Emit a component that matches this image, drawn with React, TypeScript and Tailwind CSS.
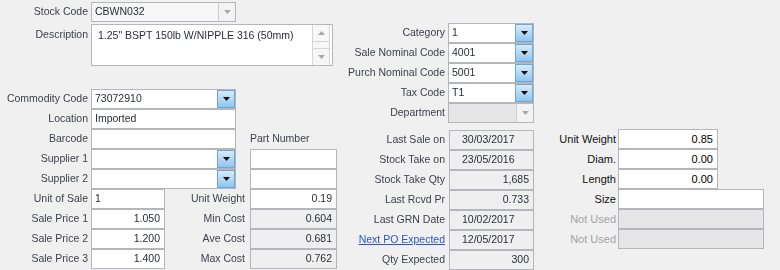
import React from "react";

type Kind = "white" | "ro" | "dis" | "lite";

const kindCls: Record<Kind, string> = {
  white: "bg-white",
  ro: "bg-[#efefef]",
  dis: "bg-[#e6e6e6]",
  lite: "bg-[#f6f6f6]",
};

const Box: React.FC<{
  w: string;
  kind?: Kind;
  right?: boolean;
  children?: React.ReactNode;
}> = ({ w, kind = "white", right, children }) => {
  return (
    <div
      className={`${w} h-[20px] flex items-center border border-[#b4b6bc] ${kindCls[kind]} ${
        right ? "justify-end pr-[4px]" : "pl-[3px]"
      } overflow-hidden whitespace-nowrap`}
    >
      {children}
    </div>
  );
};

// blue combo box arrow
const BlueBtn: React.FC = () => (
  <div className="w-[18px] h-[18px] flex items-center justify-center border border-[#6ea6d9] bg-gradient-to-b from-[#d6ecfb] to-[#8fc5ef]">
    <svg width="7" height="4" viewBox="0 0 7 4">
      <path d="M0 0 L7 0 L3.5 4 Z" fill="#111" />
    </svg>
  </div>
);

const GrayBtn: React.FC = () => (
  <div className="w-[17px] h-[18px] flex items-center justify-center border-l border-[#cfcfcf] bg-[#f3f3f3]">
    <svg width="7" height="4" viewBox="0 0 7 4">
      <path d="M0 0 L7 0 L3.5 4 Z" fill="#a8a8a8" />
    </svg>
  </div>
);

const Combo: React.FC<{ w: string; value?: string; blue?: boolean; kind?: Kind }> = ({
  w,
  value,
  blue = true,
  kind = "white",
}) => (
  <div className={`${w} h-[20px] flex items-center border border-[#b4b6bc] ${kindCls[kind]}`}>
    <div className="flex-1 pl-[3px] whitespace-nowrap overflow-hidden">{value}</div>
    {blue ? <BlueBtn /> : <GrayBtn />}
  </div>
);

const Lbl: React.FC<{ w: string; children?: React.ReactNode; muted?: boolean; link?: boolean }> = ({
  w,
  children,
  muted,
  link,
}) => (
  <div
    className={`${w} shrink-0 text-right whitespace-nowrap ${
      muted ? "text-[#a3a3a3]" : link ? "text-[#2a56c6] underline" : "text-[#3b3f4a]"
    }`}
  >
    {children}
  </div>
);

const Row: React.FC<{ children: React.ReactNode; h?: string }> = ({ children, h = "h-[20px]" }) => (
  <div className={`flex items-center ${h}`}>{children}</div>
);

export default function App() {
  return (
    <div className="w-[780px] h-[270px] bg-[#f0f0f0] overflow-hidden flex font-['Liberation_Sans',Arial,sans-serif]">
      {/* left, blurred part of the form */}
      <div className="w-[540px] flex text-[10.5px] text-[#2a2d3a] blur-[0.5px]">
        {/* column A + B */}
        <div className="w-[340px] flex flex-col pt-[2px]">
          <Row>
            <Lbl w="w-[88px]">Stock Code</Lbl>
            <div className="ml-[3px]">
              <Combo w="w-[145px]" value="CBWN032" blue={false} kind="lite" />
            </div>
          </Row>
          <div className="flex mt-[2px] h-[42px]">
            <Lbl w="w-[88px] pt-[3px]">Description</Lbl>
            <div className="ml-[3px] w-[242px] h-[42px] flex border border-[#b4b6bc] bg-white">
              <div className="flex-1 pl-[6px] pt-[3px] whitespace-nowrap">
                1.25" BSPT 150lb W/NIPPLE 316 (50mm)
              </div>
              <div className="w-[18px] mr-[2px] flex flex-col justify-between border-x border-[#d6d6d6] bg-[#f7f7f7]">
                <div className="h-[17px] flex items-center justify-center border-b border-[#d6d6d6]">
                  <svg width="7" height="4" viewBox="0 0 7 4">
                    <path d="M0 4 L7 4 L3.5 0 Z" fill="#a8a8a8" />
                  </svg>
                </div>
                <div className="h-[17px] flex items-center justify-center border-t border-[#d6d6d6]">
                  <svg width="7" height="4" viewBox="0 0 7 4">
                    <path d="M0 0 L7 0 L3.5 4 Z" fill="#a8a8a8" />
                  </svg>
                </div>
              </div>
            </div>
          </div>

          <div className="mt-[23px] flex flex-col">
            <Row>
              <Lbl w="w-[88px]">Commodity Code</Lbl>
              <div className="ml-[3px]">
                <Combo w="w-[145px]" value="73072910" />
              </div>
            </Row>
            <Row>
              <Lbl w="w-[88px]">Location</Lbl>
              <div className="ml-[3px]">
                <Box w="w-[145px]">Imported</Box>
              </div>
            </Row>
            <Row>
              <Lbl w="w-[88px]">Barcode</Lbl>
              <div className="ml-[3px]">
                <Box w="w-[145px]" />
              </div>
              <div className="ml-[14px] text-[#3b3f4a]">Part Number</div>
            </Row>
            <Row>
              <Lbl w="w-[88px]">Supplier 1</Lbl>
              <div className="ml-[3px]">
                <Combo w="w-[145px]" />
              </div>
              <div className="ml-[14px]">
                <Box w="w-[87px]" />
              </div>
            </Row>
            <Row>
              <Lbl w="w-[88px]">Supplier 2</Lbl>
              <div className="ml-[3px]">
                <Combo w="w-[145px]" />
              </div>
              <div className="ml-[14px]">
                <Box w="w-[87px]" />
              </div>
            </Row>
            {[
              ["Unit of Sale", "1", "Unit Weight", "0.19", "white"],
              ["Sale Price 1", "1.050", "Min Cost", "0.604", "ro"],
              ["Sale Price 2", "1.200", "Ave Cost", "0.681", "ro"],
              ["Sale Price 3", "1.400", "Max Cost", "0.762", "ro"],
            ].map(([l, v, l2, v2, k], i) => (
              <Row key={l}>
                <Lbl w="w-[88px]">{l}</Lbl>
                <div className="ml-[3px]">
                  <Box w="w-[74px]" right={i > 0}>
                    {v}
                  </Box>
                </div>
                <Lbl w="w-[80px]">{l2}</Lbl>
                <div className="ml-[5px]">
                  <Box w="w-[87px]" right kind={k as Kind}>
                    {v2}
                  </Box>
                </div>
              </Row>
            ))}
          </div>
        </div>

        {/* column C */}
        <div className="w-[200px] flex flex-col pt-[23px]">
          <Row>
            <Lbl w="w-[105px]">Category</Lbl>
            <div className="ml-[3px]">
              <Combo w="w-[86px]" value="1" />
            </div>
          </Row>
          <Row>
            <Lbl w="w-[105px]">Sale Nominal Code</Lbl>
            <div className="ml-[3px]">
              <Combo w="w-[86px]" value="4001" />
            </div>
          </Row>
          <Row>
            <Lbl w="w-[105px]">Purch Nominal Code</Lbl>
            <div className="ml-[3px]">
              <Combo w="w-[86px]" value="5001" />
            </div>
          </Row>
          <Row>
            <Lbl w="w-[105px]">Tax Code</Lbl>
            <div className="ml-[3px]">
              <Combo w="w-[86px]" value="T1" />
            </div>
          </Row>
          <Row>
            <Lbl w="w-[105px]">Department</Lbl>
            <div className="ml-[3px]">
              <Combo w="w-[86px]" blue={false} kind="dis" />
            </div>
          </Row>
          <div className="mt-[7px] flex flex-col">
            {[
              ["Last Sale on", "30/03/2017", false],
              ["Stock Take on", "23/05/2016", false],
              ["Stock Take Qty", "1,685", true],
              ["Last Rcvd Pr", "0.733", true],
              ["Last GRN Date", "10/02/2017", false],
              ["Next PO Expected", "12/05/2017", false],
              ["Qty Expected", "300", true],
            ].map(([l, v, r]) => (
              <Row key={l as string}>
                <Lbl w="w-[105px]" link={l === "Next PO Expected"}>
                  {l}
                </Lbl>
                <div className="ml-[4px]">
                  <Box w="w-[85px]" kind="ro" right={r as boolean}>
                    <span className={r ? "" : "pl-[9px]"}>{v}</span>
                  </Box>
                </div>
              </Row>
            ))}
          </div>
        </div>
      </div>

      {/* right panel, sharp */}
      <div className="flex-1 pt-[129px] flex flex-col text-[11px] text-black">
        {[
          ["Unit Weight", "0.85", "w-[100px]", "white"],
          ["Diam.", "0.00", "w-[100px]", "white"],
          ["Length", "0.00", "w-[100px]", "white"],
          ["Size", "", "w-[146px]", "white"],
          ["Not Used", "", "w-[146px]", "dis"],
          ["Not Used", "", "w-[146px]", "dis"],
        ].map(([l, v, w, k], i) => (
          <Row key={i}>
            <Lbl w="w-[76px]" muted={k === "dis"}>
              <span className={k === "dis" ? "" : "text-[#111]"}>{l}</span>
            </Lbl>
            <div className="ml-[2px]">
              <Box w={w} kind={k as Kind} right>
                {v}
              </Box>
            </div>
          </Row>
        ))}
      </div>
    </div>
  );
}
